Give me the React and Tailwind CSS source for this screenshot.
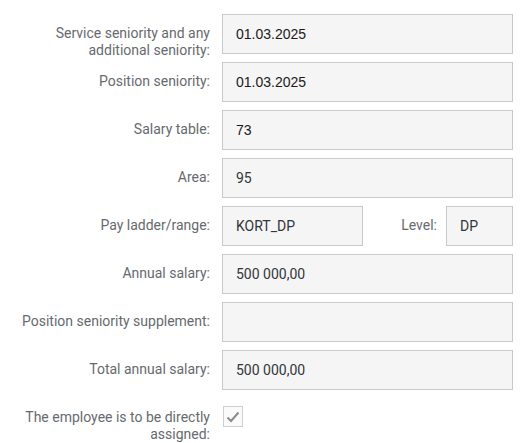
import React from 'react';

const sapFont = { fontFamily: 'Roboto, "Noto Sans", sans-serif' };

const Field = ({ value, arial, className = '' }) => (
  <div
    className={`h-[40px] border border-[#c9c9c9] bg-[#f5f5f5] flex items-center pl-[13px] text-[14px] ${
      arial ? 'text-[#1a1a1a]' : 'text-[#32363a]'
    } ${className}`}
    style={arial ? { fontFamily: '"Liberation Sans", Arial, sans-serif' } : sapFont}
  >
    {value}
  </div>
);

const Label = ({ children }) => (
  <div className="w-[190px] shrink-0 pt-[11px] text-right text-[14px] leading-[17px] text-[#666a6e]" style={sapFont}>
    {children}
  </div>
);

const Row = ({ label, children }) => (
  <div className="h-[40px] flex items-start gap-[12px]">
    <Label>{label}</Label>
    <div className="flex-1">{children}</div>
  </div>
);

const App = () => {
  return (
    <div className="w-[525px] h-[443px] bg-white pt-[14px] pl-[20px] pr-[12px] flex flex-col gap-[8px] overflow-hidden">
      <Row label="Service seniority and any additional seniority:">
        <Field value="01.03.2025" arial />
      </Row>
      <Row label="Position seniority:">
        <Field value="01.03.2025" arial />
      </Row>
      <Row label="Salary table:">
        <Field value="73" arial />
      </Row>
      <Row label="Area:">
        <Field value="95" />
      </Row>
      <Row label="Pay ladder/range:">
        <div className="flex items-start">
          <Field value="KORT_DP" className="w-[141px]" />
          <div
            className="flex-1 pt-[11px] pr-[9px] text-right text-[14px] leading-[17px] text-[#666a6e]"
            style={sapFont}
          >
            Level:
          </div>
          <Field value="DP" className="w-[67px] pl-[11px]" />
        </div>
      </Row>
      <Row label="Annual salary:">
        <Field value="500 000,00" />
      </Row>
      <Row label="Position seniority supplement:">
        <Field value="" />
      </Row>
      <Row label="Total annual salary:">
        <Field value="500 000,00" />
      </Row>
      <Row label="The employee is to be directly assigned:">
        <div className="mt-[8px] ml-[1px] w-[20px] h-[21px] border border-[#cfcfcf] bg-[#fafafa] flex items-center justify-center">
          <svg width="14" height="12" viewBox="0 0 14 12" fill="none">
            <path d="M1.5 6.5 L5 10 L12.5 1.5" stroke="#8a8a8a" strokeWidth="2" />
          </svg>
        </div>
      </Row>
    </div>
  );
};

export default App;
